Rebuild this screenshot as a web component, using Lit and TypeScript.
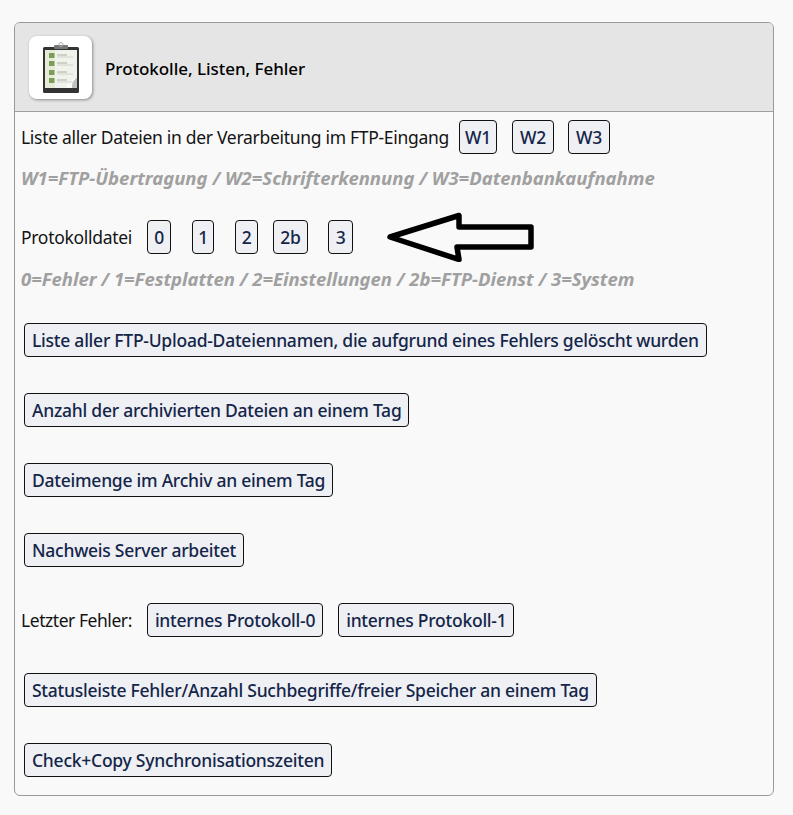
import { LitElement, html, css, svg } from "lit";
import { customElement } from "lit/decorators.js";

@customElement("app-root")
export class AppRoot extends LitElement {
  static styles = css`
    :host { display: block; height: 815px; background: #f9f9f9; font-family: "Noto Sans", "Open Sans", sans-serif; color: #111; box-sizing: border-box; padding: 22px 19px 0 14px; }
    .card { height: 774px; box-sizing: border-box; border: 1px solid #999; border-radius: 6px; overflow: hidden; display: flex; flex-direction: column; }
    .head { height: 89px; flex: none; box-sizing: border-box; background: #e5e5e5; border-bottom: 1px solid #a0a0a0; display: flex; align-items: center; gap: 13px; padding: 0 0 0 14px; }
    .tile { width: 63px; height: 63px; border-radius: 8px; background: #fff; box-shadow: 1px 1px 3px #8a8a8a; display: flex; align-items: center; justify-content: center; margin-top: 1px; }
    .title { font-size: 17px; font-weight: 500; color: #000; letter-spacing: -0.04px; margin-top: 2px; }
    .body { padding: 8px 6px 0 6px; display: flex; flex-direction: column; }
    .row { display: flex; align-items: center; height: 34px; }
    .lbl { font-size: 17.5px; color: #141414; letter-spacing: -0.3px; }
    .tight { letter-spacing: -0.45px; }
    button { font-family: inherit; font-size: 17.5px; font-weight: 500; letter-spacing: -0.25px; color: #14254a; background: #eff0f3; border: 1px solid #111; border-radius: 4px; height: 34px; padding: 0 7px; box-sizing: border-box; white-space: nowrap; }
    .sq { flex: none; padding: 0; text-align: center; }
    .hint { font-size: 18.5px; font-style: italic; font-weight: 700; color: #a0a0a0; line-height: 24px; }
    .h1 { margin-top: 12px; }
    .r2 { margin-top: 30px; }
    .h2 { margin-top: 13px; letter-spacing: -0.03px; }
    .list { margin-top: 32px; display: flex; flex-direction: column; gap: 36px; padding-left: 3px; }
    .mixed { margin-left: -3px; gap: 15px; }
    .arrow { margin-left: 31px; flex: none; }
  `;

  private clip() {
    return html`<svg width="38" height="52" viewBox="0 0 38 52">
      <rect x="1" y="5" width="36" height="46" rx="1.5" fill="#333"/>
      <rect x="3" y="8" width="32" height="38" fill="#f0f3ec"/>
      <rect x="3" y="8" width="10" height="38" fill="#e4ecd8"/>
      <path d="M24 46 L35 35 V46 Z" fill="#bfc1be"/>
      <path d="M24 46 Q26 39 35 35 Q29 41 30 46 Z" fill="#fafafa"/>
      <rect x="12" y="3" width="14" height="4" rx="1" fill="#777"/>
      <circle cx="19" cy="2.5" r="2" fill="none" stroke="#aaa" stroke-width="1"/>
      ${[13, 21, 30, 38].map(y => svg`
        <rect x="7" y="${y - 2}" width="5.5" height="5" fill="#7c9c58"/>
        <path d="M15 ${y} H25" stroke="#aab09f" stroke-width="1.2"/>
        <path d="M15 ${y + 2} H31" stroke="#d0d3cb" stroke-width="1"/>`)}
    </svg>`;
  }

  render() {
    return html`<div class="card">
      <div class="head">
        <div class="tile">${this.clip()}</div>
        <div class="title">Protokolle, Listen, Fehler</div>
      </div>
      <div class="body">
        <div class="row">
          <span class="lbl">Liste aller Dateien in der Verarbeitung im FTP-Eingang</span>
          <button class="sq" style="margin-left:10px;width:38px">W1</button>
          <button class="sq" style="margin-left:15px;width:42px">W2</button>
          <button class="sq" style="margin-left:14px;width:42px">W3</button>
        </div>
        <div class="hint h1">W1=FTP-Übertragung / W2=Schrifterkennung / W3=Datenbankaufnahme</div>
        <div class="row r2">
          <span class="lbl">Protokolldatei</span>
          <button class="sq" style="margin-left:15px;width:24px">0</button>
          <button class="sq" style="margin-left:21px;width:22px">1</button>
          <button class="sq" style="margin-left:21px;width:23px">2</button>
          <button class="sq" style="margin-left:15px;width:35px">2b</button>
          <button class="sq" style="margin-left:20px;width:25px">3</button>
          <svg class="arrow" width="152" height="50" viewBox="0 0 152 50">
            <path d="M6 25 L75 3.5 V15 H147 V35 H73 L75 47.5 Z" fill="none" stroke="#000" stroke-width="5.5" stroke-linejoin="round"/>
          </svg>
        </div>
        <div class="hint h2">0=Fehler / 1=Festplatten / 2=Einstellungen / 2b=FTP-Dienst / 3=System</div>
        <div class="list">
          <div class="row"><button>Liste aller FTP-Upload-Dateiennamen, die aufgrund eines Fehlers gelöscht wurden</button></div>
          <div class="row"><button>Anzahl der archivierten Dateien an einem Tag</button></div>
          <div class="row"><button>Dateimenge im Archiv an einem Tag</button></div>
          <div class="row"><button>Nachweis Server arbeitet</button></div>
          <div class="row mixed">
            <span class="lbl tight">Letzter Fehler:</span>
            <button>internes Protokoll-0</button>
            <button>internes Protokoll-1</button>
          </div>
          <div class="row"><button>Statusleiste Fehler/Anzahl Suchbegriffe/freier Speicher an einem Tag</button></div>
          <div class="row"><button>Check+Copy Synchronisationszeiten</button></div>
        </div>
      </div>
    </div>`;
  }
}
